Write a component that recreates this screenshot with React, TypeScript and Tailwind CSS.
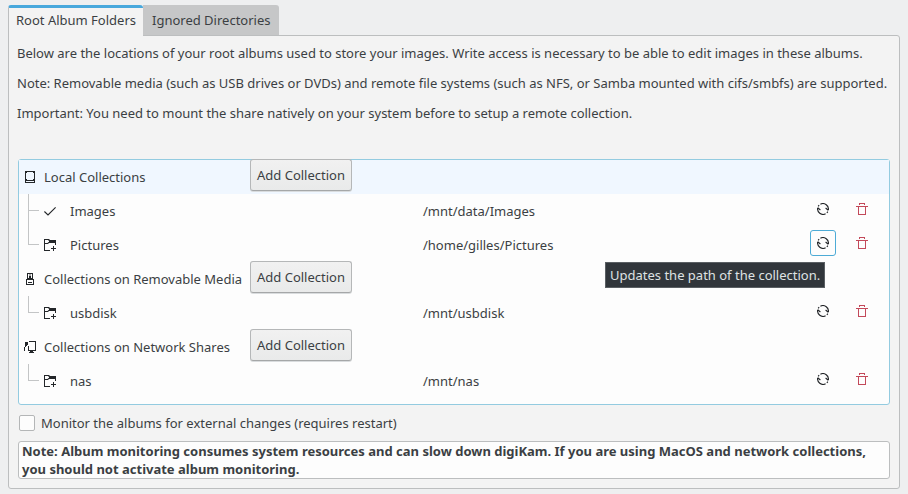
import React from "react";

type IconName = "disk" | "usb" | "network" | "check" | "folder";

function RowIcon({ name }: { name: IconName }) {
  const common = { width: 12, height: 12, viewBox: "0 0 12 12", className: "shrink-0 text-[#232629]" };
  switch (name) {
    case "disk":
      return (
        <svg {...common} fill="currentColor">
          <path fillRule="evenodd" d="M1 0h10v12H1zM2 1v10h8V1z" />
          <path d="M2 8h1v1h1v1H2zM9 8h1v2H8V9h1zM4 9h4v1H4zM2 1h1v1H2zM9 1h1v1H9z" />
        </svg>
      );
    case "usb":
      return (
        <svg {...common} fill="currentColor">
          <path fillRule="evenodd" d="M3 0h6v6h1v6H2V6h1zM4 1v4h1V3h.6V1zM6.4 1v2H7v2h1V1zM3 7v4h6V7z" />
          <path d="M4 9h4v1H4z" />
        </svg>
      );
    case "network":
      return (
        <svg {...common} fill="currentColor">
          <path d="M5 0h7v10H9v1h1v1H5v-1h1v-1H5V9h6V1H5zM1 1h3v3H3v1H2v1H1v4H0V6h1zM4 5h1v5H4z" />
        </svg>
      );
    case "check":
      return (
        <svg {...common} fill="none" stroke="currentColor" strokeWidth="1.1">
          <path d="M.4 6.5 4 10 11.6 2.4" />
        </svg>
      );
    case "folder":
      return (
        <svg {...common} fill="currentColor">
          <path d="M0 0h5l1 1h6v5h-1V4H5L4 5H1v6h5v1H0zM1 1v3h2.5l1-1H5V2L4 1z" fillRule="evenodd" />
          <path d="M9 7h1v2h2v1h-2v2H9v-2H7V9h2z" />
        </svg>
      );
  }
}

function RefreshIcon() {
  return (
    <svg width="12" height="12" viewBox="0 0 12 12" fill="none" stroke="#232629" strokeWidth="1.15">
      <path d="M3.4 1.2A5.5 5.5 0 0 1 11.3 7.2M8.6 10.8A5.5 5.5 0 0 1 .7 4.8" />
      <path d="M8.6 5 11.3 7.2M3.4 7 .7 4.8M1.2 3.3l.9-1.2M10.8 8.7l-.9 1.2" />
    </svg>
  );
}

function TrashIcon() {
  return (
    <svg width="12" height="12" viewBox="0 0 12 12" fill="#c3495a">
      <path fillRule="evenodd" d="M3 0h6v2H8V1H4v1H3zM0 3h12v1h-2v8H2V4H0zM3 4v7h6V4z" />
    </svg>
  );
}

function GroupRow({ icon, label, selected = false }: { icon: IconName; label: string; selected?: boolean }) {
  return (
    <div className={`flex h-[34px] shrink-0 pl-[5px] ${selected ? "bg-[#f0f7ff]" : ""}`}>
      <div className="flex w-[226px] items-center gap-2">
        <RowIcon name={icon} />
        <span>{label}</span>
      </div>
      <button className="-mt-px h-8 w-[102px] rounded-[3px] border border-[#b5b7b8] border-b-[#a5a7a8] bg-linear-to-b from-[#f1f1f1] to-[#e9eaea] shadow-[0_1px_0_#d9dcde]">
        Add Collection
      </button>
    </div>
  );
}

function AlbumRow({ icon, label, path, last = false, focused = false }: {
  icon: IconName; label: string; path: string; last?: boolean; focused?: boolean;
}) {
  return (
    <div className="flex h-[34px] shrink-0 pl-[9px]">
      <div className="flex w-4 flex-col">
        <div className="h-[17px] w-[11px] border-b border-l border-[#c3c5c6]" />
        {!last && <div className="w-px flex-1 bg-[#c3c5c6]" />}
      </div>
      <div className="flex w-[379px] items-center gap-[14px]">
        <RowIcon name={icon} />
        <span>{label}</span>
      </div>
      <span className="w-[387px] leading-[34px]">{path}</span>
      <div className="-mt-[2px] flex h-[34px] items-center">
        <div className={`flex h-[26px] w-[26px] items-center justify-center rounded-[3px] border ${focused ? "border-[#4dabd6]" : "border-transparent"}`}>
          <RefreshIcon />
        </div>
        <div className="ml-5">
          <TrashIcon />
        </div>
      </div>
    </div>
  );
}

export default function App() {
  return (
    <main className="flex h-[494px] w-[908px] flex-col overflow-hidden bg-[#eeeff0] pt-[5px] pl-2 font-['Noto_Sans',sans-serif] text-[13px] leading-[18px] whitespace-nowrap text-[#3b3f43]">
      <nav className="relative z-10 flex h-[31px]">
        <div className="h-[31px] w-[135px] rounded-t-[3px] border-t-[3px] border-l border-t-[#48a8dc] border-l-[#bcbebf] bg-[#f3f3f3] pt-[3px] pl-[7px]">
          Root Album Folders
        </div>
        <div className="h-[31px] w-[136px] rounded-tr-[3px] border-b border-[#bcbebf] bg-[#c6c7c8] pt-1.5 pl-[9px]">
          Ignored Directories
        </div>
      </nav>
      <section className="-mt-px flex h-[454px] w-[892px] flex-col rounded-[3px] rounded-tl-none border border-[#bcbebf] bg-[#f3f3f3] px-[9px]">
        <div className="-ml-px flex h-[123px] flex-col gap-3 pt-2 tracking-[-0.005px]">
          <p>Below are the locations of your root albums used to store your images. Write access is necessary to be able to edit images in these albums.</p>
          <p>Note: Removable media (such as USB drives or DVDs) and remote file systems (such as NFS, or Samba mounted with cifs/smbfs) are supported.</p>
          <p>Important: You need to mount the share natively on your system before to setup a remote collection.</p>
        </div>
        <div className="relative flex h-[246px] flex-col rounded-[3px] border border-[#93cbe0] bg-[#fdfdfd]">
          <GroupRow icon="disk" label="Local Collections" selected />
          <AlbumRow icon="check" label="Images" path="/mnt/data/Images" />
          <AlbumRow icon="folder" label="Pictures" path="/home/gilles/Pictures" last focused />
          <GroupRow icon="usb" label="Collections on Removable Media" />
          <AlbumRow icon="folder" label="usbdisk" path="/mnt/usbdisk" last />
          <GroupRow icon="network" label="Collections on Network Shares" />
          <AlbumRow icon="folder" label="nas" path="/mnt/nas" last />
          <div className="absolute top-[102px] left-[586px] h-[26px] w-[220px] border border-[#5a5f63] bg-[#31363b] pl-1 leading-6 text-[#dfe2e3]">
            Updates the path of the collection.
          </div>
        </div>
        <label className="flex h-9 items-center gap-1.5 pl-px">
          <span className="h-4 w-4 rounded-[2px] border border-[#b4b6b7] bg-[#fdfdfd]" />
          Monitor the albums for external changes (requires restart)
        </label>
        <div className="h-[38px] rounded-[3px] border border-[#bcbebf] bg-[#fdfdfd] pl-[3px] font-bold">
          Note: Album monitoring consumes system resources and can slow down digiKam. If you are using MacOS and network collections,
          <br />
          you should not activate album monitoring.
        </div>
      </section>
    </main>
  );
}
